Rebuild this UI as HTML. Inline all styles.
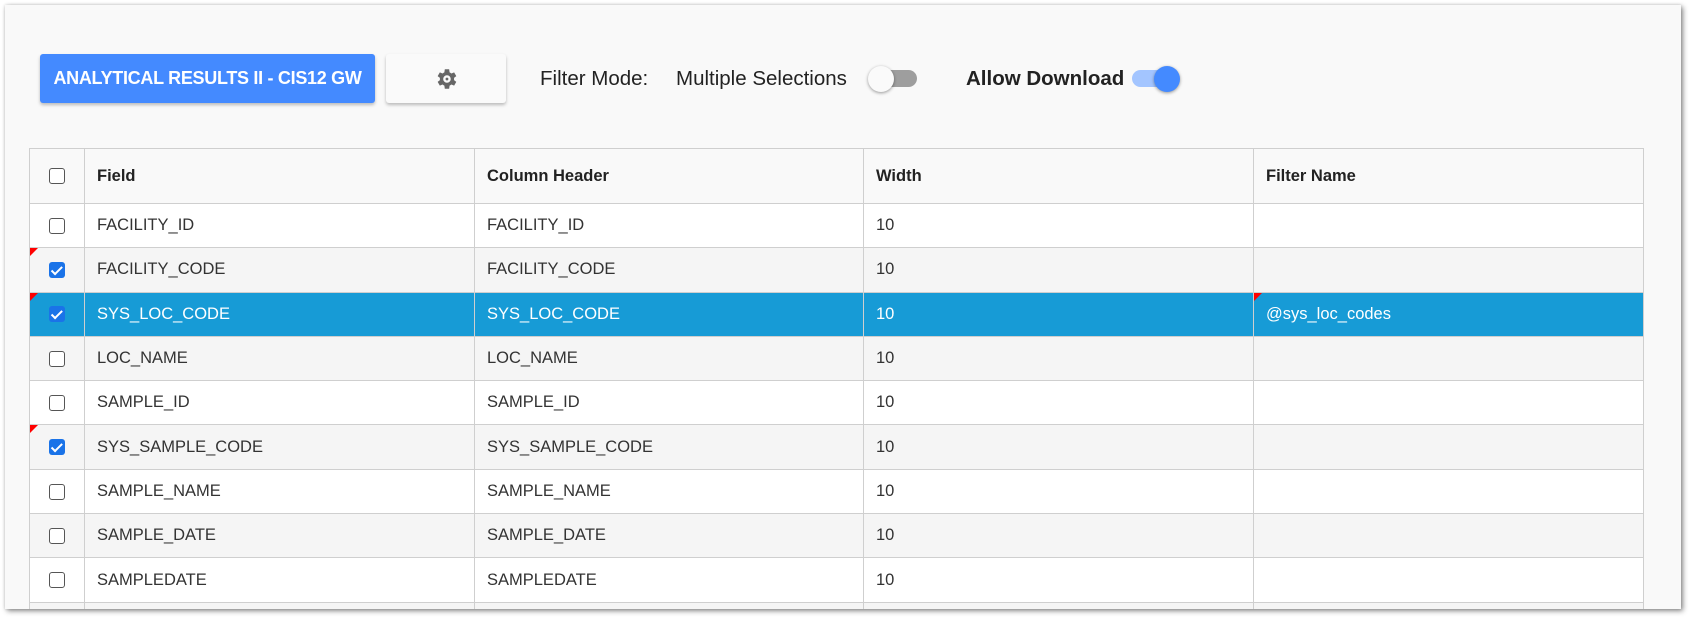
<!DOCTYPE html>
<html><head><meta charset="utf-8"><style>
*{margin:0;padding:0;box-sizing:border-box}
body{width:1690px;height:618px;background:#fff;font-family:"Liberation Sans",Roboto,sans-serif;position:relative;overflow:hidden}
.panel{position:absolute;left:5px;top:5px;width:1676px;height:604px;background:#f9f9f9;box-shadow:2px 2px 5px rgba(0,0,0,.45),0 0 3px rgba(0,0,0,.15);overflow:hidden}
.btn{position:absolute;height:49px;border-radius:3px;box-shadow:0 2px 3px rgba(0,0,0,.25)}
.b1{background:#448aff;color:#fff;font-weight:bold;font-size:18px;line-height:49px;text-align:center;letter-spacing:-.3px;white-space:nowrap}
.b2{background:#fafafa}
.lbl{position:absolute;font-size:20.5px;color:#222}
.tg{position:absolute;width:36px;height:17px;border-radius:9px}
.kn{position:absolute;width:26px;height:26px;border-radius:50%;box-shadow:0 1px 3px rgba(0,0,0,.4)}
table{position:absolute;left:24px;top:143px;border-collapse:collapse;table-layout:fixed;width:1614px}
td,th{border:1px solid #cfcfcf;font-size:16.5px;color:#333;text-align:left;padding-left:12px;position:relative}
th{height:55px;font-weight:bold;color:#222;background:#f9f9f9}
td{height:44.3px;background:#fff}
tr:nth-child(odd) td{background:#f5f5f5}
tr.sel td{background:#179bd6;color:#fff}
.c0{padding:0;text-align:center}
.cb{display:inline-block;width:16px;height:16px;border:1.5px solid #555;border-radius:3px;vertical-align:middle;background:#fff}
.ck{display:inline-block;width:16px;height:16px;background:#1a73e8;border-radius:3px;vertical-align:middle;position:relative}
.ck:after{content:"";position:absolute;left:5px;top:1.5px;width:4px;height:8.5px;border:solid #fff;border-width:0 2.3px 2.3px 0;transform:rotate(45deg)}
.red{position:absolute;left:0;top:0;width:0;height:0;border-top:8px solid #f00;border-right:8px solid transparent}
</style></head><body>
<div class="panel">
<div class="btn b1" style="left:35px;top:49px;width:335px">ANALYTICAL RESULTS II - CIS12 GW</div>
<div class="btn b2" style="left:381px;top:49px;width:120px">
<svg width="26" height="26" viewBox="0 0 24 24" style="position:absolute;left:47px;top:12px"><path fill="#666" d="M19.4 13a7.5 7.5 0 0 0 0-2l2.1-1.6-2-3.5-2.5 1a7.4 7.4 0 0 0-1.7-1L14.9 3h-4l-.4 2.9a7.4 7.4 0 0 0-1.7 1l-2.5-1-2 3.5L6.4 11a7.5 7.5 0 0 0 0 2l-2.1 1.6 2 3.5 2.5-1a7.4 7.4 0 0 0 1.7 1l.4 2.9h4l.4-2.9a7.4 7.4 0 0 0 1.7-1l2.5 1 2-3.5zM12.9 15.5a3.5 3.5 0 1 1 0-7 3.5 3.5 0 0 1 0 7z"/><circle cx="12.9" cy="12" r="1.3" fill="#666"/></svg>
</div>
<div class="lbl" style="left:535px;top:62px">Filter Mode:</div>
<div class="lbl" style="left:671px;top:62px">Multiple Selections</div>
<div class="tg" style="left:876px;top:65px;background:#9e9e9e"></div>
<div class="kn" style="left:863px;top:61px;background:#fafafa"></div>
<div class="lbl" style="left:961px;top:62px;font-weight:bold">Allow Download</div>
<div class="tg" style="left:1127px;top:65px;background:#a3c5ff"></div>
<div class="kn" style="left:1149px;top:61px;background:#448aff"></div>
<table>
<colgroup><col style="width:55px"><col style="width:390px"><col style="width:389px"><col style="width:390px"><col style="width:390px"></colgroup>
<tr><th class="c0"><span class="cb"></span></th><th>Field</th><th>Column Header</th><th>Width</th><th>Filter Name</th></tr>
<tr><td class="c0"><span class="cb"></span></td><td>FACILITY_ID</td><td>FACILITY_ID</td><td>10</td><td></td></tr>
<tr><td class="c0"><span class="red"></span><span class="ck"></span></td><td>FACILITY_CODE</td><td>FACILITY_CODE</td><td>10</td><td></td></tr>
<tr class="sel"><td class="c0"><span class="red"></span><span class="ck"></span></td><td>SYS_LOC_CODE</td><td>SYS_LOC_CODE</td><td>10</td><td><span class="red"></span>@sys_loc_codes</td></tr>
<tr><td class="c0"><span class="cb"></span></td><td>LOC_NAME</td><td>LOC_NAME</td><td>10</td><td></td></tr>
<tr><td class="c0"><span class="cb"></span></td><td>SAMPLE_ID</td><td>SAMPLE_ID</td><td>10</td><td></td></tr>
<tr><td class="c0"><span class="red"></span><span class="ck"></span></td><td>SYS_SAMPLE_CODE</td><td>SYS_SAMPLE_CODE</td><td>10</td><td></td></tr>
<tr><td class="c0"><span class="cb"></span></td><td>SAMPLE_NAME</td><td>SAMPLE_NAME</td><td>10</td><td></td></tr>
<tr><td class="c0"><span class="cb"></span></td><td>SAMPLE_DATE</td><td>SAMPLE_DATE</td><td>10</td><td></td></tr>
<tr><td class="c0"><span class="cb"></span></td><td>SAMPLEDATE</td><td>SAMPLEDATE</td><td>10</td><td></td></tr>
<tr><td class="c0"></td><td></td><td></td><td></td><td></td></tr>
</table>
</div>
</body></html>
